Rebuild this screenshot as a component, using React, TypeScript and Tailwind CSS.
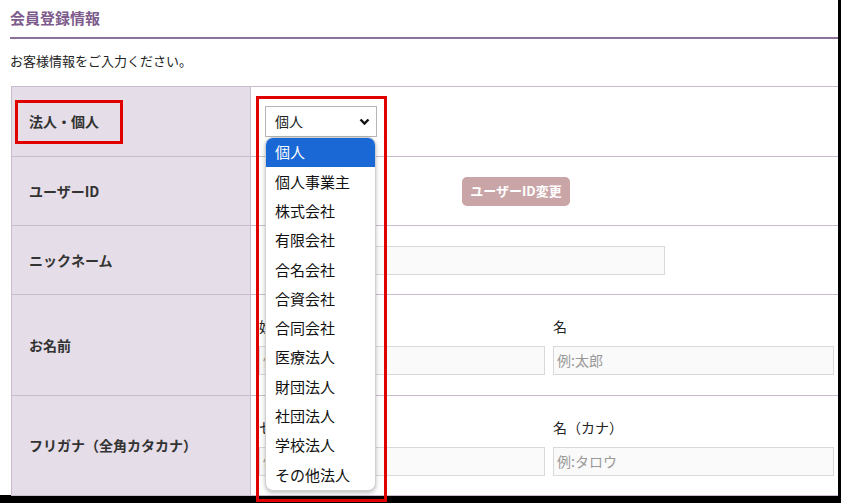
import React from 'react';

const options = [
  '個人',
  '個人事業主',
  '株式会社',
  '有限会社',
  '合名会社',
  '合資会社',
  '合同会社',
  '医療法人',
  '財団法人',
  '社団法人',
  '学校法人',
  'その他法人',
];

const font = { fontFamily: '"Noto Sans CJK JP", "Noto Sans", sans-serif' };

const Row: React.FC<{ label: string; h: string; children: React.ReactNode }> = ({ label, h, children }) => (
  <div className={`grid grid-cols-[239px_1fr] border-b border-[#c8bccd] ${h}`}>
    <div className="bg-[#e5dee8] border-r border-[#c8bccd] flex items-center pl-[17px] text-[14px] font-bold text-[#333]">
      {label}
    </div>
    {children}
  </div>
);

const NameField: React.FC<{ label: string; placeholder: string; w: string }> = ({ label, placeholder, w }) => (
  <div className={w}>
    <div className="text-[14px] leading-[22px] text-[#222] mb-[9px]">{label}</div>
    <div className="h-[29px] border border-[#d9d9d9] bg-[#fafafa] flex items-center pl-[3px] text-[14px] text-[#999]">
      {placeholder}
    </div>
  </div>
);

const App: React.FC = () => {
  return (
    <div className="w-[841px] h-[503px] relative overflow-hidden bg-white text-[#222]" style={font}>
      <div className="flex h-[495px]">
        <div className="flex-1 pl-[10px]">
          <h2 className="pt-[7px] pb-[8px] text-[15px] leading-[22px] font-bold text-[#7d5b8c] border-b-2 border-[#8c7298]">
            会員登録情報
          </h2>
          <p className="pt-[12px] pb-[15px] text-[13px] leading-[20px] text-[#222]">
            お客様情報をご入力ください。
          </p>
          <div className="border-l border-t border-[#c8bccd] ml-px">
            <Row label="法人・個人" h="h-[70px]">
              <div className="flex items-center pl-[14px]">
                <div className="w-[112px] h-[31px] border border-[#b5b5b5] bg-white flex items-center justify-between pl-[9px] pr-[6px] text-[14px]">
                  <span>個人</span>
                  <svg width="11" height="8" viewBox="0 0 11 8">
                    <path d="M1.5 1.5 L5.5 5.5 L9.5 1.5" fill="none" stroke="#111" strokeWidth="2.4" />
                  </svg>
                </div>
              </div>
            </Row>
            <Row label="ユーザーID" h="h-[69px]">
              <div className="flex items-center pl-[211px]">
                <button className="w-[108px] h-[29px] rounded-[5px] bg-[#c9a5a7] text-white text-[13px] font-bold">
                  ユーザーID変更
                </button>
              </div>
            </Row>
            <Row label="ニックネーム" h="h-[69px]">
              <div className="flex items-center pl-[14px]">
                <div className="w-[400px] h-[29px] border border-[#d9d9d9] bg-[#fafafa]" />
              </div>
            </Row>
            <Row label="お名前" h="h-[101px]">
              <div className="pl-[8px] pt-[20px] flex gap-[8px]">
                <NameField label="姓" placeholder="例:山田" w="w-[286px]" />
                <NameField label="名" placeholder="例:太郎" w="w-[281px]" />
              </div>
            </Row>
            <Row label="フリガナ（全角カタカナ）" h="h-[100px]">
              <div className="pl-[8px] pt-[20px] flex gap-[8px]">
                <NameField label="セイ（カナ）" placeholder="例:ヤマダ" w="w-[286px]" />
                <NameField label="名（カナ）" placeholder="例:タロウ" w="w-[281px]" />
              </div>
            </Row>
          </div>
        </div>
        <div className="w-[3px] bg-black" />
      </div>
      <div className="h-[8px] bg-black" />

      {/* open select list */}
      <div className="absolute left-[265px] top-[137px] w-[111px] bg-white rounded-[8px] border border-[#d0d0d0] shadow-[0_2px_4px_rgba(0,0,0,0.25)] overflow-hidden">
        {options.map((o, i) => (
          <div
            key={o}
            className={
              i === 0
                ? 'h-[29.3px] flex items-center pl-[9px] text-[15px] bg-[#1a68d6] text-white'
                : 'h-[29.3px] flex items-center pl-[9px] text-[15px] text-[#111]'
            }
          >
            {o}
          </div>
        ))}
      </div>

      {/* annotations */}
      <div className="absolute left-[15px] top-[100px] w-[108px] h-[44px] border-[3px] border-[#e00000]" />
      <div className="absolute left-[256px] top-[96px] w-[131px] h-[406px] border-[3px] border-[#e00000]" />
    </div>
  );
};

export default App;
